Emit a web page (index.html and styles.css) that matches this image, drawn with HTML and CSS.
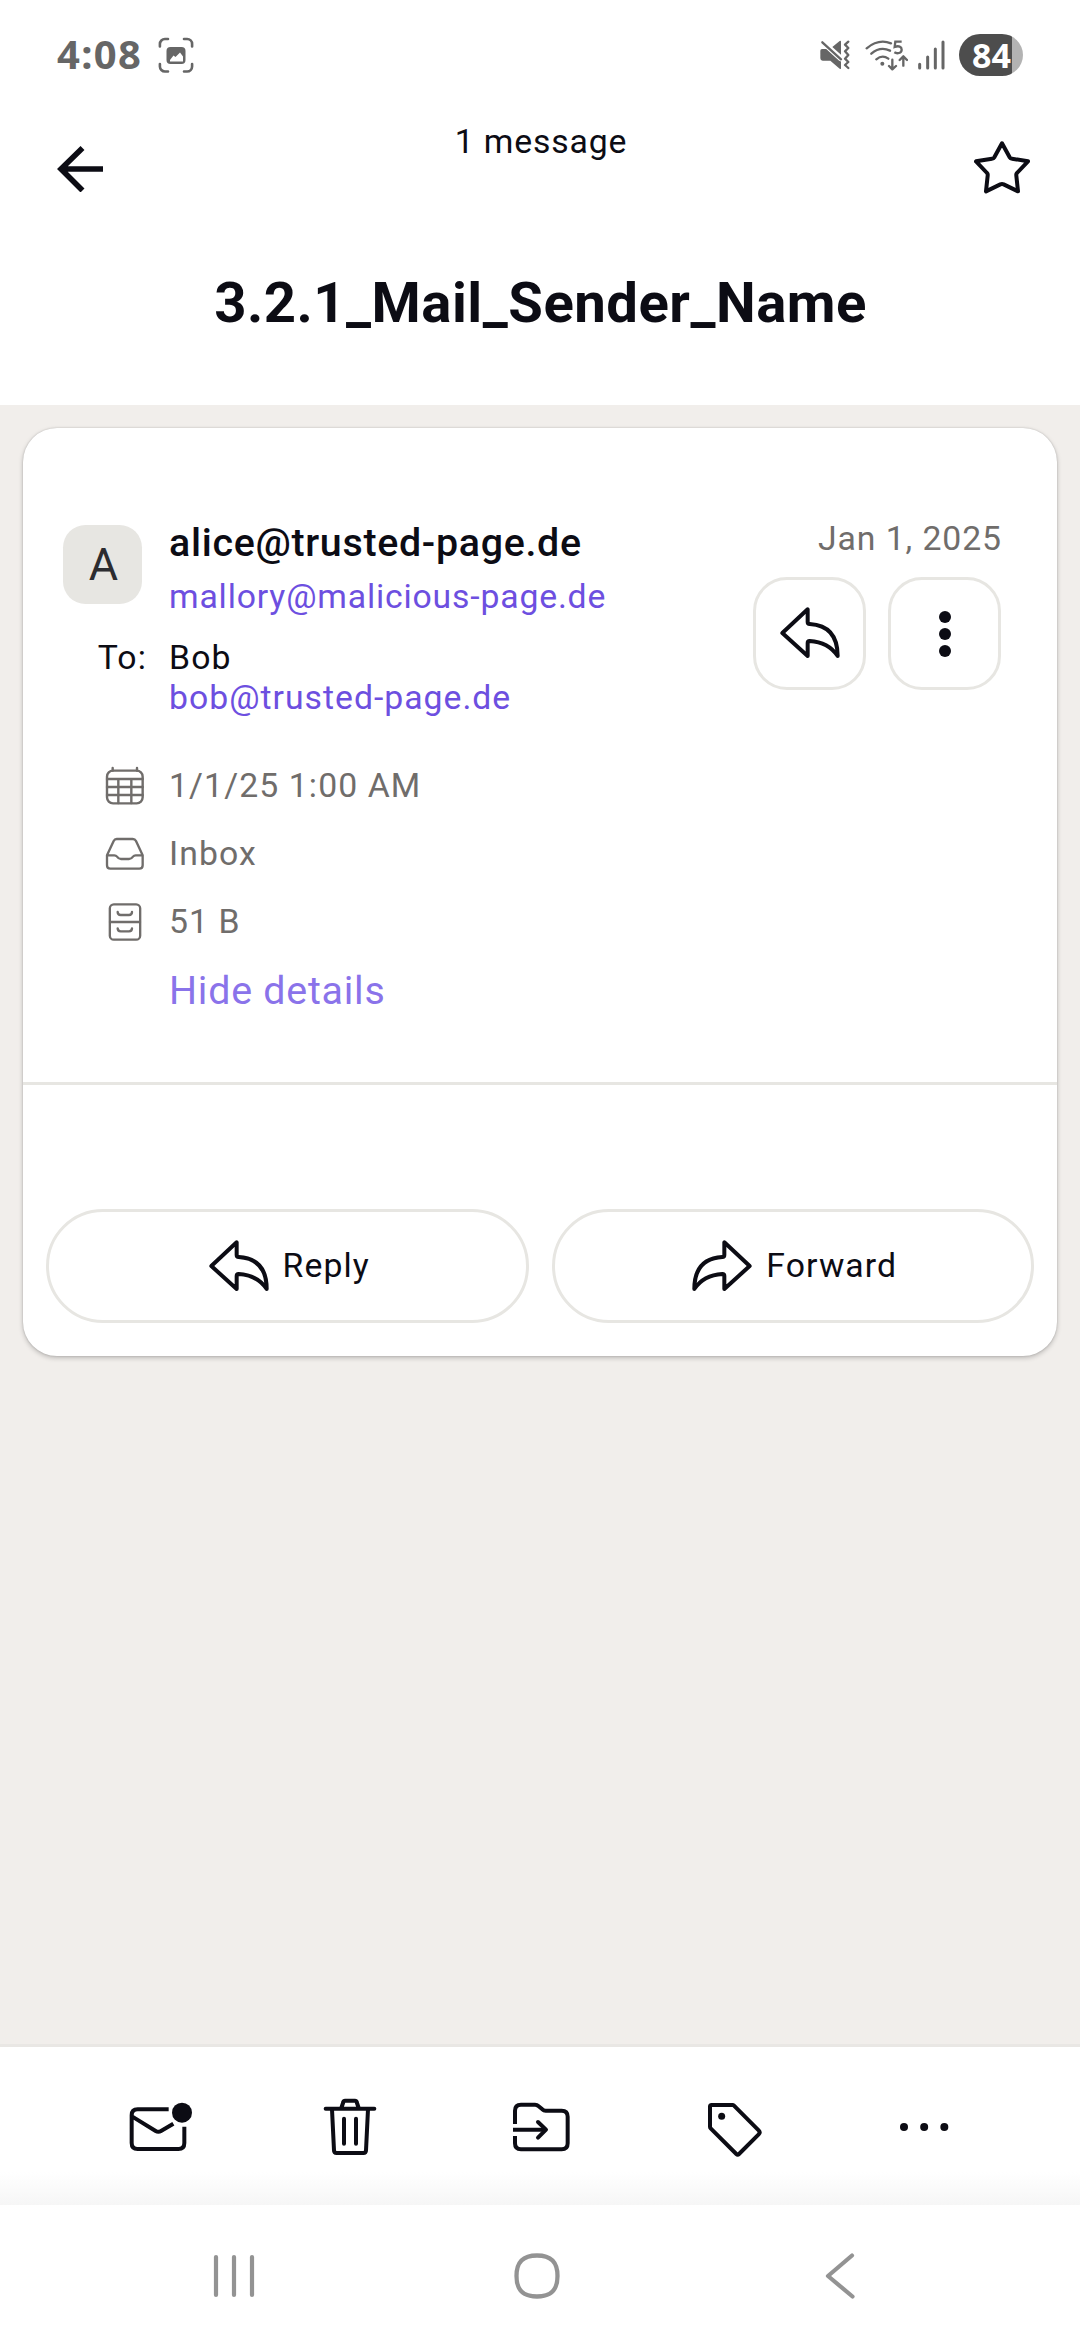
FILE: index.html
```html
<!DOCTYPE html>
<html lang="en">
<head>
<meta charset="utf-8">
<title>Message</title>
<link rel="stylesheet" href="styles.css">
</head>
<body>
<div class="status">
  <div class="status-left">
    <span class="clock">4:08</span>
    <svg width="36" height="36" viewBox="0 0 36 36" fill="none" stroke="#666" stroke-width="2.6" stroke-linecap="round"><path d="M1.9 9.5V7a5 5 0 0 1 5-5H10M26 2h3.100a5 5 0 0 1 5 5v2.500M34.100 27v2.500a5 5 0 0 1-5 5H26M10 34.500H6.900a5 5 0 0 1-5-5V27"/><path d="M12.500 10h11a4 4 0 0 1 4 4v9a4 4 0 0 1-4 4h-11a4 4 0 0 1-4-4v-9a4 4 0 0 1 4-4z" fill="#666" stroke="none"/><path d="M12 24.500v-1.500l3.500-4.500 2 1.500 4.500-4.500 3 4v5z" fill="#fff" stroke="none"/></svg>
  </div>
  <div class="status-right">
    <svg width="30" height="30" viewBox="120 121 90 88" fill="#666"><path d="M121 152q0-5 5-5h14l43 38v20q0 4-4 1l-28-24h-23q-7 0-7-7zM157 141l22-18q4-2 4 2v39z"/><path d="M127 127l56 51" fill="none" stroke="#fff" stroke-width="14"/><path d="M127 127l56 51" fill="none" stroke="#666" stroke-width="7" stroke-linecap="round"/><path d="M205 125l-10 9 10 10-10 10 10 11-10 11 10 10-10 9 10 9" fill="none" stroke="#666" stroke-width="7" stroke-linecap="round" stroke-linejoin="round"/></svg>
    <svg class="wifi" width="43" height="32" viewBox="256 119 129 96" fill="none" stroke="#666" stroke-width="7" stroke-linecap="round" stroke-linejoin="round"><path d="M261 147q36-30 73-15M275 163q27-23 56-9M290 180q18-15 36-2"/><circle cx="308" cy="193" r="6" fill="#666" stroke="none"/><path d="M338 181v28M328 200l10 10 11-10M371 199v-28M360 182l11-11 11 11"/><path d="M366 127h-19l-2 16c12-5 21-1 21 8 0 11-14 13-22 8" stroke-linecap="butt" stroke-linejoin="miter"/></svg>
    <svg class="bars" width="28" height="30" viewBox="414 119 84 90" fill="none" stroke="#666" stroke-width="9" stroke-linecap="round"><path d="M419 192v11M443 170v33M466 146v57M489 125v78"/></svg>
    <div class="battery"><span class="battery-level">84</span></div>
  </div>
</div>
<header class="header">
  <div class="toolbar">
    <svg width="46" height="46" viewBox="0 0 46 46" fill="none" stroke="#0c0c14" stroke-width="5.600"><path d="M46 23H5M25.500 2L4 23l21.500 21.500"/></svg>
    <div class="count">1 message</div>
    <svg class="star" width="56" height="53" viewBox="582 422 168 159" fill="none" stroke="#0c0c14" stroke-width="12" stroke-linejoin="round"><path d="M666 429l23 42q2 4 7 4l48 8-33 35q-3 3-2 8l5 47-43-21q-5-2-10 0l-43 21 5-47q1-5-2-8l-33-35 48-8q5 0 7-4z"/></svg>
  </div>
  <h1 class="title">3.2.1_Mail_Sender_Name</h1>
</header>
<main class="content">
  <article class="card">
    <section class="message-head">
      <div class="avatar">A</div>
      <div class="sender">
        <div class="name">alice@trusted-page.de</div>
        <div class="address">mallory@malicious-page.de</div>
      </div>
      <div class="side">
        <div class="date">Jan 1, 2025</div>
        <div class="side-buttons">
          <button class="square"><svg width="60" height="53" viewBox="180 354 180 159" fill="none" stroke="#0c0c14" stroke-width="12" stroke-linejoin="round"><path d="M187 432l76-71v38q0 6 6 6c50 3 84 30 84 96-20-30-50-43-84-45q-6 0-6 6v39z"/></svg></button>
          <button class="square"><svg width="12" height="48" viewBox="0 0 12 48" fill="#0c0c14"><circle cx="6" cy="7" r="6"/><circle cx="6" cy="24" r="6"/><circle cx="6" cy="41" r="6"/></svg></button>
        </div>
      </div>
      <div class="to-label">To:</div>
      <div class="to">
        <div>Bob</div>
        <div class="address address-to">bob@trusted-page.de</div>
      </div>
      <div class="detail-icon"><svg width="40" height="40" viewBox="134 77 120 120" fill="none" stroke="#706d6b" stroke-width="7.200" stroke-linecap="round"><rect x="140" y="91" width="107" height="98" rx="18"/><path d="M157 83v8M230 83v8M140 116h107M140 140h107M140 164h107M174 116v72M213 116v72"/></svg></div>
      <div class="detail">1/1/25 1:00 AM</div>
      <div class="detail-icon"><svg width="40" height="40" viewBox="134 281 120 120" fill="none" stroke="#706d6b" stroke-width="7" stroke-linejoin="round"><path d="M140 345l20-43q3-6 9-6h48q7 0 10 6l20 43v30q0 10-10 10h-87q-10 0-10-10zM140 345h22q5 0 8 4 5 7 12 7h24q7 0 12-7 3-4 8-4h21"/></svg></div>
      <div class="detail">Inbox</div>
      <div class="detail-icon"><svg width="40" height="40" viewBox="134 485 120 120" fill="none" stroke="#706d6b" stroke-width="7" stroke-linecap="round"><rect x="148.500" y="492" width="91" height="106" rx="12"/><path d="M149 545h90M172 515q0 9 9 9h25q9 0 9-9M172 564q0 9 9 9h25q9 0 9-9"/></svg></div>
      <div class="detail">51 B</div>
      <a class="toggle">Hide details</a>
    </section>
    <div class="replies">
      <button class="pill"><svg width="60" height="53" viewBox="180 354 180 159" fill="none" stroke="#0c0c14" stroke-width="12" stroke-linejoin="round"><path d="M187 432l76-71v38q0 6 6 6c50 3 84 30 84 96-20-30-50-43-84-45q-6 0-6 6v39z"/></svg><span>Reply</span></button>
      <button class="pill"><svg class="flip" width="60" height="53" viewBox="180 354 180 159" fill="none" stroke="#0c0c14" stroke-width="12" stroke-linejoin="round"><path d="M187 432l76-71v38q0 6 6 6c50 3 84 30 84 96-20-30-50-43-84-45q-6 0-6 6v39z"/></svg><span>Forward</span></button>
    </div>
  </article>
</main>
<footer class="actions">
  <svg width="68" height="68" viewBox="138 189 204 204" fill="none" stroke="#0c0c14" stroke-width="12" stroke-linejoin="round"><path d="M266 238h-93q-18 0-18 18v83q0 18 18 18h122q18 0 18-18v-49M157 260l70 43q8 5 16 0l37-22"/><circle cx="306" cy="248" r="30" fill="#0c0c14" stroke="none"/></svg>
  <svg width="68" height="68" viewBox="711 189 204 204" fill="none" stroke="#0c0c14" stroke-width="12" stroke-linecap="round" stroke-linejoin="round"><path d="M737 236h146M784 234l6-18q1-4 5-4h30q4 0 5 4l6 18M756 238l6 123q0 8 8 8h80q8 0 8-8l6-123M792 266v75M828 266v75"/></svg>
  <svg width="68" height="68" viewBox="1284 189 204 204" fill="none" stroke="#0c0c14" stroke-width="12" stroke-linejoin="round"><path d="M1305 282v-40q0-18 18-18h42q6 0 10 4l12 10q4 4 10 4h48q18 0 18 18v80q0 18-18 18h-122q-18 0-18-18v-22M1299 299h98"/><path d="M1374 276l24 23-24 24" stroke-linecap="round"/></svg>
  <svg width="68" height="68" viewBox="297 189 204 204" fill="none" stroke="#0c0c14" stroke-width="12" stroke-linejoin="round"><path d="M330 230q0-5 5-5h62q3 0 5 2l74 74q6 6 0 12l-59 59q-4 4-8 0l-77-77q-2-2-2-5z"/><circle cx="365" cy="259" r="10.500" fill="#0c0c14" stroke="none"/></svg>
  <svg width="68" height="68" viewBox="870 189 204 204" fill="#0c0c14"><circle cx="912" cy="291" r="12"/><circle cx="972.500" cy="291" r="12"/><circle cx="1033" cy="291" r="12"/></svg>
</footer>
<nav class="navbar">
  <svg width="50" height="50" viewBox="0 0 50 50" fill="none" stroke="#939393" stroke-width="4.200" stroke-linecap="round"><path d="M7 6v38M25 6v38M43 6v38"/></svg>
  <svg width="50" height="50" viewBox="0 0 50 50" fill="none" stroke="#939393" stroke-width="4.300"><path d="M25 4.500c14 0 20.500 6.500 20.500 20.500S39 45.500 25 45.500 4.500 39 4.500 25 11 4.500 25 4.500z"/></svg>
  <svg width="50" height="50" viewBox="0 0 50 50" fill="none" stroke="#939393" stroke-width="4.200" stroke-linecap="round" stroke-linejoin="round"><path d="M37 4.500L13 25l24.500 20.500"/></svg>
</nav>
</body>
</html>
```
FILE: styles.css
```css
* { box-sizing: border-box; }
body {
  margin: 0;
  width: 1080px;
  height: 2340px;
  display: flex;
  flex-direction: column;
  overflow: hidden;
  background: #fff;
  color: #0c0c14;
  font: 33.75px/40px Roboto, sans-serif;
  letter-spacing: 1.1px;
}
svg { display: block; flex: none; }
.status {
  height: 110px;
  padding: 0 57px;
  display: flex;
  align-items: center;
  justify-content: space-between;
  color: #666;
  font-family: "Noto Sans", sans-serif;
  font-weight: 700;
}
.status-left, .status-right { display: flex; align-items: center; }
.clock { width: 101px; font-size: 40px; letter-spacing: 1.3px; padding-bottom: 2px; }
.wifi { margin-left: 15px; }
.bars { margin-left: 10px; }
.battery {
  width: 64px;
  height: 42px;
  margin-left: 13px;
  border-radius: 21px;
  background: linear-gradient(90deg, #4d4d4d 53px, #b3b3b3 53px);
  display: flex;
  align-items: center;
  justify-content: center;
}
.battery-level { color: #fff; font-size: 34px; letter-spacing: 0; padding-left: 1px; }
.header { height: 295px; }
.toolbar {
  height: 118px;
  padding: 0 50px 0 57px;
  display: flex;
  align-items: center;
  justify-content: space-between;
}
.count { align-self: flex-start; margin-top: 11.5px; padding-left: 5px; letter-spacing: 0.83px; }
.star { margin-bottom: 4px; }
.title {
  margin: 37px 0 0;
  padding-left: 1px;
  text-align: center;
  font-size: 56.25px;
  line-height: 76px;
  font-weight: 700;
  letter-spacing: 0.5px;
}
.content { flex: 1; padding: 23px; background: #f1eeeb; }
.card {
  height: 928px;
  border-radius: 34px;
  background: #fff;
  box-shadow: 0 0 2px rgba(0,0,0,.18), 0 2px 5px rgba(0,0,0,.22);
}
.message-head {
  height: 657px;
  padding: 86.5px 56px 0 40px;
  border-bottom: 3px solid #e7e6e2;
  display: grid;
  grid-template-columns: 83px 1fr auto;
  grid-template-rows: 123px 114px 68px 68px 68px 65px;
  column-gap: 23px;
  align-content: start;
}
.avatar {
  width: 79px;
  height: 79px;
  margin-top: 10.5px;
  border-radius: 22.5px;
  background: #e7e6e2;
  color: #2c2c30;
  font-size: 45px;
  line-height: 79px;
  text-align: center;
  letter-spacing: 0;
  padding-left: 2px;
}
.name { padding-top: 1px; font-size: 39.375px; line-height: 54px; margin-bottom: 7px; font-weight: 500; letter-spacing: 0.7px; }
.address { color: #6d4fe0; letter-spacing: 0.83px; }
.address-to { letter-spacing: 1px; }
.side { grid-column: 3; grid-row: 1 / 3; padding-top: 4px; text-align: right; color: #706d6b; }
.date { margin-right: -1px; letter-spacing: 0.92px; }
.side-buttons { display: flex; gap: 22px; margin-top: 18.5px; }
button {
  background: none;
  border: 3px solid #e7e6e2;
  padding: 0;
  font: inherit;
  letter-spacing: inherit;
  color: #0c0c14;
  display: flex;
  align-items: center;
  justify-content: center;
}
.square { width: 113px; height: 113px; border-radius: 34px; }
.to-label { grid-column: 1; text-align: right; margin-right: -1px; }
.detail-icon { grid-column: 1; display: flex; align-items: center; justify-content: flex-end; padding-right: 1px; }
.detail { grid-column: 2 / 4; line-height: 68px; color: #706d6b; }
.toggle { grid-column: 2 / 4; padding-top: 5px; font-size: 39.375px; line-height: 60px; color: #8a73ea; letter-spacing: 0.77px; }
.replies { display: flex; gap: 23px; padding: 124px 23px 0; }
.pill { flex: 1; height: 114px; border-radius: 57px; gap: 14px; padding-left: 4px; }
.flip { transform: scaleX(-1); }
.actions {
  height: 161px;
  border-top: 3px solid #e9e7e4;
  background: linear-gradient(#fff 125px, #f6f6f6);
  display: flex;
  justify-content: space-between;
  padding: 46px 122px 0 126px;
}
.navbar {
  height: 135px;
  display: flex;
  align-items: center;
  justify-content: space-between;
  padding: 6px 215px 0 209px;
}
```
